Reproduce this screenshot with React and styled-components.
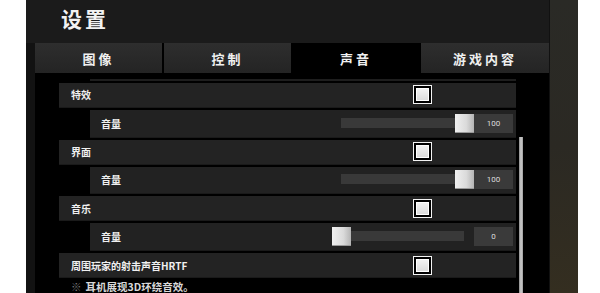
import React from "react";
import styled, { createGlobalStyle } from "styled-components";

const GlobalStyle = createGlobalStyle`
  html, body {
    margin: 0;
    padding: 0;
    background: #ffffff;
  }
  body {
    font-family: "Noto Sans CJK SC", "Noto Sans", sans-serif;
  }
`;

const Screen = styled.div`
  width: 600px;
  height: 293px;
  display: flex;
  overflow: hidden;
  background: #ffffff;
`;

const LeftMargin = styled.div`
  width: 26px;
  background: #ffffff;
`;

const Panel = styled.div`
  width: 523px;
  display: flex;
  flex-direction: column;
  background: #1b1b1b;
`;

const Backdrop = styled.div`
  width: 28px;
  background: linear-gradient(180deg, #2a2a26 0%, #2b2923 50%, #342e20 100%);
  border-left: 1px solid #111;
`;

const Header = styled.div`
  height: 43px;
  display: flex;
  align-items: center;
  padding-left: 35px;
  box-sizing: border-box;
`;

const Title = styled.h1`
  margin: 0;
  font-size: 21px;
  font-weight: 700;
  letter-spacing: 3px;
  color: #f2f2f2;
  line-height: 1;
  margin-top: -6px;
`;

const Body = styled.div`
  flex: 1;
  display: flex;
  min-height: 0;
`;

const SideStrip = styled.div`
  width: 9px;
  background: #121212;
`;

const Main = styled.div`
  width: 514px;
  display: flex;
  flex-direction: column;
  background: #000;
`;

const Tabs = styled.div`
  height: 30px;
  display: grid;
  grid-template-columns: 129px 127px 130px 128px;
  background: #000;
`;

const Tab = styled.div`
  display: flex;
  align-items: center;
  justify-content: center;
  font-size: 13px;
  font-weight: 700;
  letter-spacing: 3px;
  color: #f0f0f0;
  margin-right: ${(p) => (p.$gap ? "2px" : "0")};
  background: ${(p) =>
    p.$active ? "#000" : "linear-gradient(180deg, #2e2e2e 0%, #242424 100%)"};
`;

const Content = styled.div`
  flex: 1;
  display: flex;
  min-height: 0;
`;

const List = styled.div`
  width: 457px;
  margin-left: 24px;
  padding-top: 6px;
  display: flex;
  flex-direction: column;
  gap: 2px;
`;

const Stub = styled.div`
  height: 2px;
  margin-left: 31px;
  background: #1e1e1e;
`;

const Row = styled.div`
  height: 25px;
  display: grid;
  grid-template-columns: 1fr 19px 84px;
  align-items: center;
  padding-left: 12px;
  background: #232323;
  border-bottom: 1px solid #1a1a1a;
  box-sizing: border-box;
  font-size: 10px;
  font-weight: 700;
  color: #f0f0f0;
`;

const SubRow = styled.div`
  height: 28px;
  margin-left: 31px;
  display: grid;
  grid-template-columns: 1fr 142px 39px;
  align-items: center;
  padding: 0 3px 0 11px;
  background: #222;
  border-bottom: 1px solid #1a1a1a;
  box-sizing: border-box;
  font-size: 10px;
  font-weight: 700;
  color: #f0f0f0;
`;

const Check = styled.div`
  width: 19px;
  height: 19px;
  box-sizing: border-box;
  border: 1px solid #f4f4f4;
  background: #000;
  padding: 2px;
  display: flex;
`;

const CheckFill = styled.div`
  flex: 1;
  border: 1px solid #ffffff;
  background: linear-gradient(180deg, #f2f2f2 0%, #dcdcdc 100%);
`;

const Slider = styled.div`
  position: relative;
  height: 19px;
`;

const Track = styled.div`
  position: absolute;
  left: 9px;
  right: 10px;
  top: 4px;
  height: 10px;
  background: #393939;
`;

const Thumb = styled.div`
  position: absolute;
  top: 0;
  width: 19px;
  height: 19px;
  box-sizing: border-box;
  background: linear-gradient(90deg, #f0f0f0 0%, #dadada 60%, #b4b4b4 100%);
  border-bottom: 1px solid #999;
`;

const Value = styled.div`
  height: 19px;
  display: flex;
  align-items: center;
  justify-content: center;
  background: #3a3a3a;
  font-family: "Roboto", "Liberation Sans", sans-serif;
  font-size: 8px;
  font-weight: 400;
  color: #dcdcdc;
`;

const Note = styled.div`
  padding-left: 12px;
  font-size: 10.5px;
  font-weight: 700;
  color: #d8d8d8;
  line-height: 13px;
  white-space: nowrap;
`;

const Mark = styled.span`
  color: #7a7a7a;
  margin-right: 4px;
`;

const ScrollColumn = styled.div`
  flex: 1;
  position: relative;
`;

const ScrollThumb = styled.div`
  position: absolute;
  left: 3px;
  top: 64px;
  bottom: 0;
  width: 4px;
  background: linear-gradient(90deg, #8a8a8a 0%, #d0d0d0 50%, #9a9a9a 100%);
`;

function Toggle() {
  return (
    <Check>
      <CheckFill />
    </Check>
  );
}

function Volume({ value }) {
  return (
    <SubRow>
      <span>音量</span>
      <Slider>
        <Track />
        <Thumb style={{ left: `${(value / 100) * 123}px` }} />
      </Slider>
      <Value>{value}</Value>
    </SubRow>
  );
}

const groups = [
  { label: "特效", volume: 100 },
  { label: "界面", volume: 100 },
  { label: "音乐", volume: 0 },
];

export default function App() {
  return (
    <>
      <GlobalStyle />
      <Screen>
        <LeftMargin />
        <Panel>
          <Header>
            <Title>设置</Title>
          </Header>
          <Body>
            <SideStrip />
            <Main>
              <Tabs>
                <Tab $gap>图像</Tab>
                <Tab>控制</Tab>
                <Tab $active>声音</Tab>
                <Tab>游戏内容</Tab>
              </Tabs>
              <Content>
                <List>
                  <Stub />
                  {groups.map((g) => (
                    <React.Fragment key={g.label}>
                      <Row>
                        <span>{g.label}</span>
                        <Toggle />
                      </Row>
                      <Volume value={g.volume} />
                    </React.Fragment>
                  ))}
                  <Row>
                    <span>周围玩家的射击声音HRTF</span>
                    <Toggle />
                  </Row>
                  <Note>
                    <Mark>※</Mark>耳机展现3D环绕音效。
                  </Note>
                </List>
                <ScrollColumn>
                  <ScrollThumb />
                </ScrollColumn>
              </Content>
            </Main>
          </Body>
        </Panel>
        <Backdrop />
      </Screen>
    </>
  );
}
